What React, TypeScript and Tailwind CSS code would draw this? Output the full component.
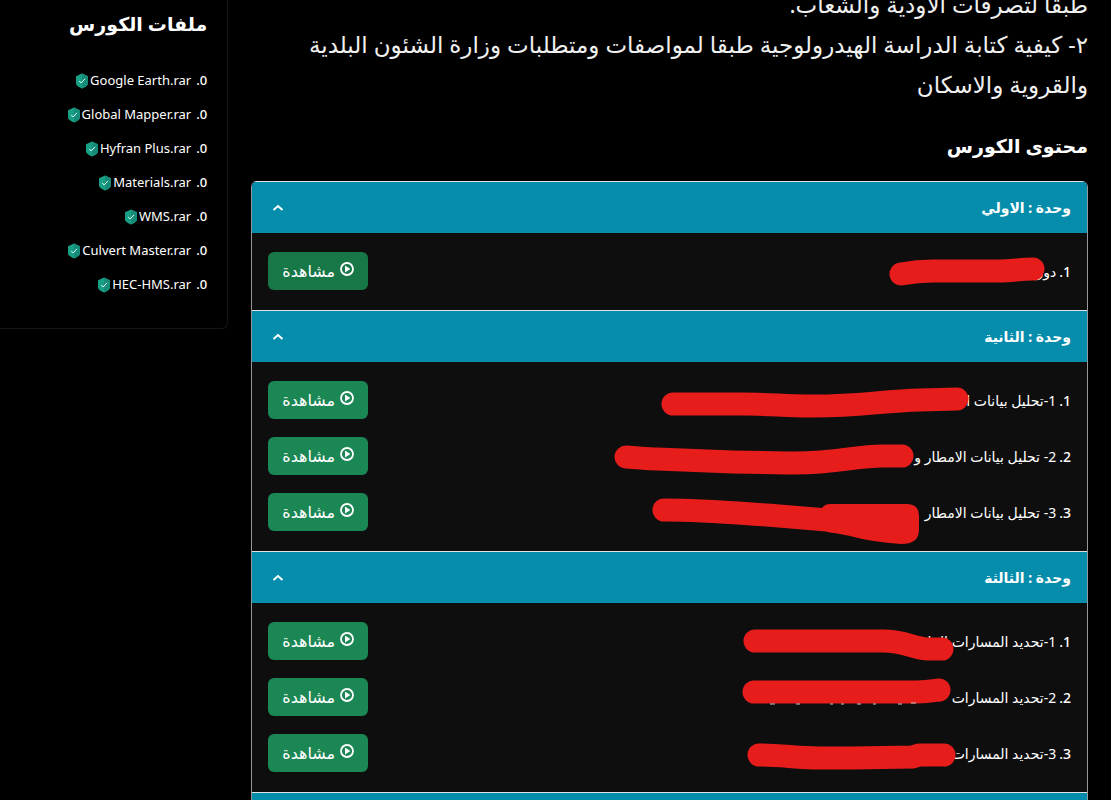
import React, { useState } from 'react';

interface Unit {
  title: string;
  lessons: string[];
  strokes: string[];
  blob?: string;
  specks?: string;
}

const FILES = [
  'Google Earth.rar',
  'Global Mapper.rar',
  'Hyfran Plus.rar',
  'Materials.rar',
  'WMS.rar',
  'Culvert Master.rar',
  'HEC-HMS.rar',
];

const UNITS: Unit[] = [
  {
    title: 'وحدة : الاولي',
    lessons: ['دور'],
    strokes: ['M314 41C325 39 335 38 346 38H413C424 38 434 36 446 36'],
  },
  {
    title: 'وحدة : الثانية',
    lessons: ['1-تحليل بيانات ا', '2- تحليل بيانات الامطار و', '3- تحليل بيانات الامطار'],
    strokes: [
      'M86 42H156C180 42 200 44 220 44C265 45 295 39 333 38L370 37',
      'M39 95C55 96 60 97 70 97L146 100L200 101C250 102 266 94 296 94H315',
      'M77 148C115 148 150 151 180 153L240 158L263 161',
    ],
    blob: 'M243 142H320Q332 142 332 154V168Q332 182 314 182Q285 180 263 174Q250 171 240 170L235 146Q238 142 243 142Z',
  },
  {
    title: 'وحدة : الثالثة',
    lessons: ['1-تحديد المسارات الما', '2-تحديد المسارات', '3-تحديد المسارات'],
    strokes: [
      'M168 38H296C318 38 325 45 340 46H355',
      'M167 89H330C340 89 345 88 352 87',
      'M172 152C195 152 210 155 233 155H266L325 154C329 153 331 152 333 152H357',
    ],
    specks: 'M183 101h5M209 101h4M243 101h3M254 101h3M270 101h4M286 101h3M311 101h4M324 100h5',
  },
  { title: 'وحدة : الرابعة', lessons: [], strokes: [] },
];

const ShieldIcon = () => (
  <svg className="h-4 w-3 shrink-0" viewBox="0 0 12 16" aria-hidden="true">
    <path d="M6 .5L12 3.3V10.7Q12 12.7 6 15.5Q0 12.7 0 10.7V3.3Z" fill="#17a085" />
    <path d="M6 .5L12 3.3V10.7Q12 12.7 6 15.5Z" fill="#168b77" />
    <path d="M3.2 8L5.2 10L9 5.8" fill="none" stroke="#e9fffa" strokeWidth="1" />
  </svg>
);

const PlayIcon = () => (
  <svg className="-mt-1 h-[14px] w-[14px] shrink-0" viewBox="0 0 14 14" aria-hidden="true">
    <circle cx="7" cy="7" r="6" fill="none" stroke="white" strokeWidth="1.8" />
    <path d="M5 3.6L10.4 7L5 10.4Z" fill="white" />
  </svg>
);

const ChevronIcon = ({ open }: { open: boolean }) => (
  <svg className={`h-3 w-3 ${open ? '' : 'rotate-180'}`} viewBox="0 0 12 12" aria-hidden="true">
    <path d="M1.5 8L6 4L10.5 8" fill="none" stroke="white" strokeWidth="2" />
  </svg>
);

const UnitPanel = ({ unit, first }: { unit: Unit; first: boolean }) => {
  const [open, setOpen] = useState(true);

  return (
    <section className="border-t border-[#dee2e6]">
      <h3>
        <button
          type="button"
          aria-expanded={open}
          onClick={() => setOpen(!open)}
          className="flex h-[51px] w-full items-center justify-between bg-[#068dac] ps-4 pe-5 text-[14px] font-bold"
        >
          <span>{unit.title}</span>
          <ChevronIcon open={open} />
        </button>
      </h3>
      {open && unit.lessons.length > 0 && (
        <div className="relative bg-[#0e0e0e] px-4 pt-[19px] pb-5">
          <ol className="flex flex-col gap-[18px]">
            {unit.lessons.map((lesson, i) => (
              <li key={lesson} className="flex h-[38px] items-center justify-between">
                <div className="flex gap-[3px] text-[14px]">
                  <span className="font-medium">{i + 1}.</span>
                  <span>{lesson}</span>
                </div>
                <button
                  type="button"
                  className={`flex h-[38px] w-[100px] items-center justify-center gap-[5px] rounded-md text-[16px] ${first ? 'bg-[#187747]' : 'bg-[#1a8754]'}`}
                >
                  <PlayIcon />
                  <span>مشاهدة</span>
                </button>
              </li>
            ))}
          </ol>
          <svg className="pointer-events-none absolute top-0 right-0 h-full w-[500px]" aria-hidden="true">
            {unit.strokes.map((d) => (
              <path key={d} d={d} fill="none" stroke="#e71d1c" strokeWidth="23" strokeLinecap="round" />
            ))}
            {unit.blob && <path d={unit.blob} fill="#e71d1c" />}
            {unit.specks && <path d={unit.specks} stroke="#c8c8c8" strokeWidth="1" />}
          </svg>
        </div>
      )}
    </section>
  );
};

export default function App() {
  return (
    <div
      dir="rtl"
      lang="ar"
      className="grid h-screen grid-cols-[minmax(0,11fr)_minmax(0,3fr)] items-start gap-[23px] overflow-hidden bg-black ps-[23px] font-['Noto_Sans','DejaVu_Sans',sans-serif] text-white"
    >
      <main>
        <p className="-mt-4 text-[23px] leading-10 text-[#f0f0f0]">
          طبقا لتصرفات الاودية والشعاب.
          <br />
          ٢- كيفية كتابة الدراسة الهيدرولوجية طبقا لمواصفات ومتطلبات وزارة الشئون البلدية والقروية والاسكان
        </p>
        <h2 className="mt-[26px] mb-[19px] text-[19px] leading-8 font-bold">محتوى الكورس</h2>
        <div className="overflow-hidden rounded-t-md border-x border-[#96989c]">
          {UNITS.map((unit, i) => (
            <UnitPanel key={unit.title} unit={unit} first={i === 0} />
          ))}
        </div>
      </main>

      <aside className="rounded-br-md border-r border-b border-[#151515] px-5 pt-2 pb-[26px]">
        <h2 className="mb-6 text-[19px] leading-8 font-bold">ملفات الكورس</h2>
        <ol>
          {FILES.map((file) => (
            <li key={file} className="flex h-[34px] items-center gap-[5px] text-[13px]">
              <span className="font-medium">0.</span>
              <a href="#" className="flex items-center gap-[2px]">
                <span dir="ltr">{file}</span>
                <ShieldIcon />
              </a>
            </li>
          ))}
        </ol>
      </aside>
    </div>
  );
}
